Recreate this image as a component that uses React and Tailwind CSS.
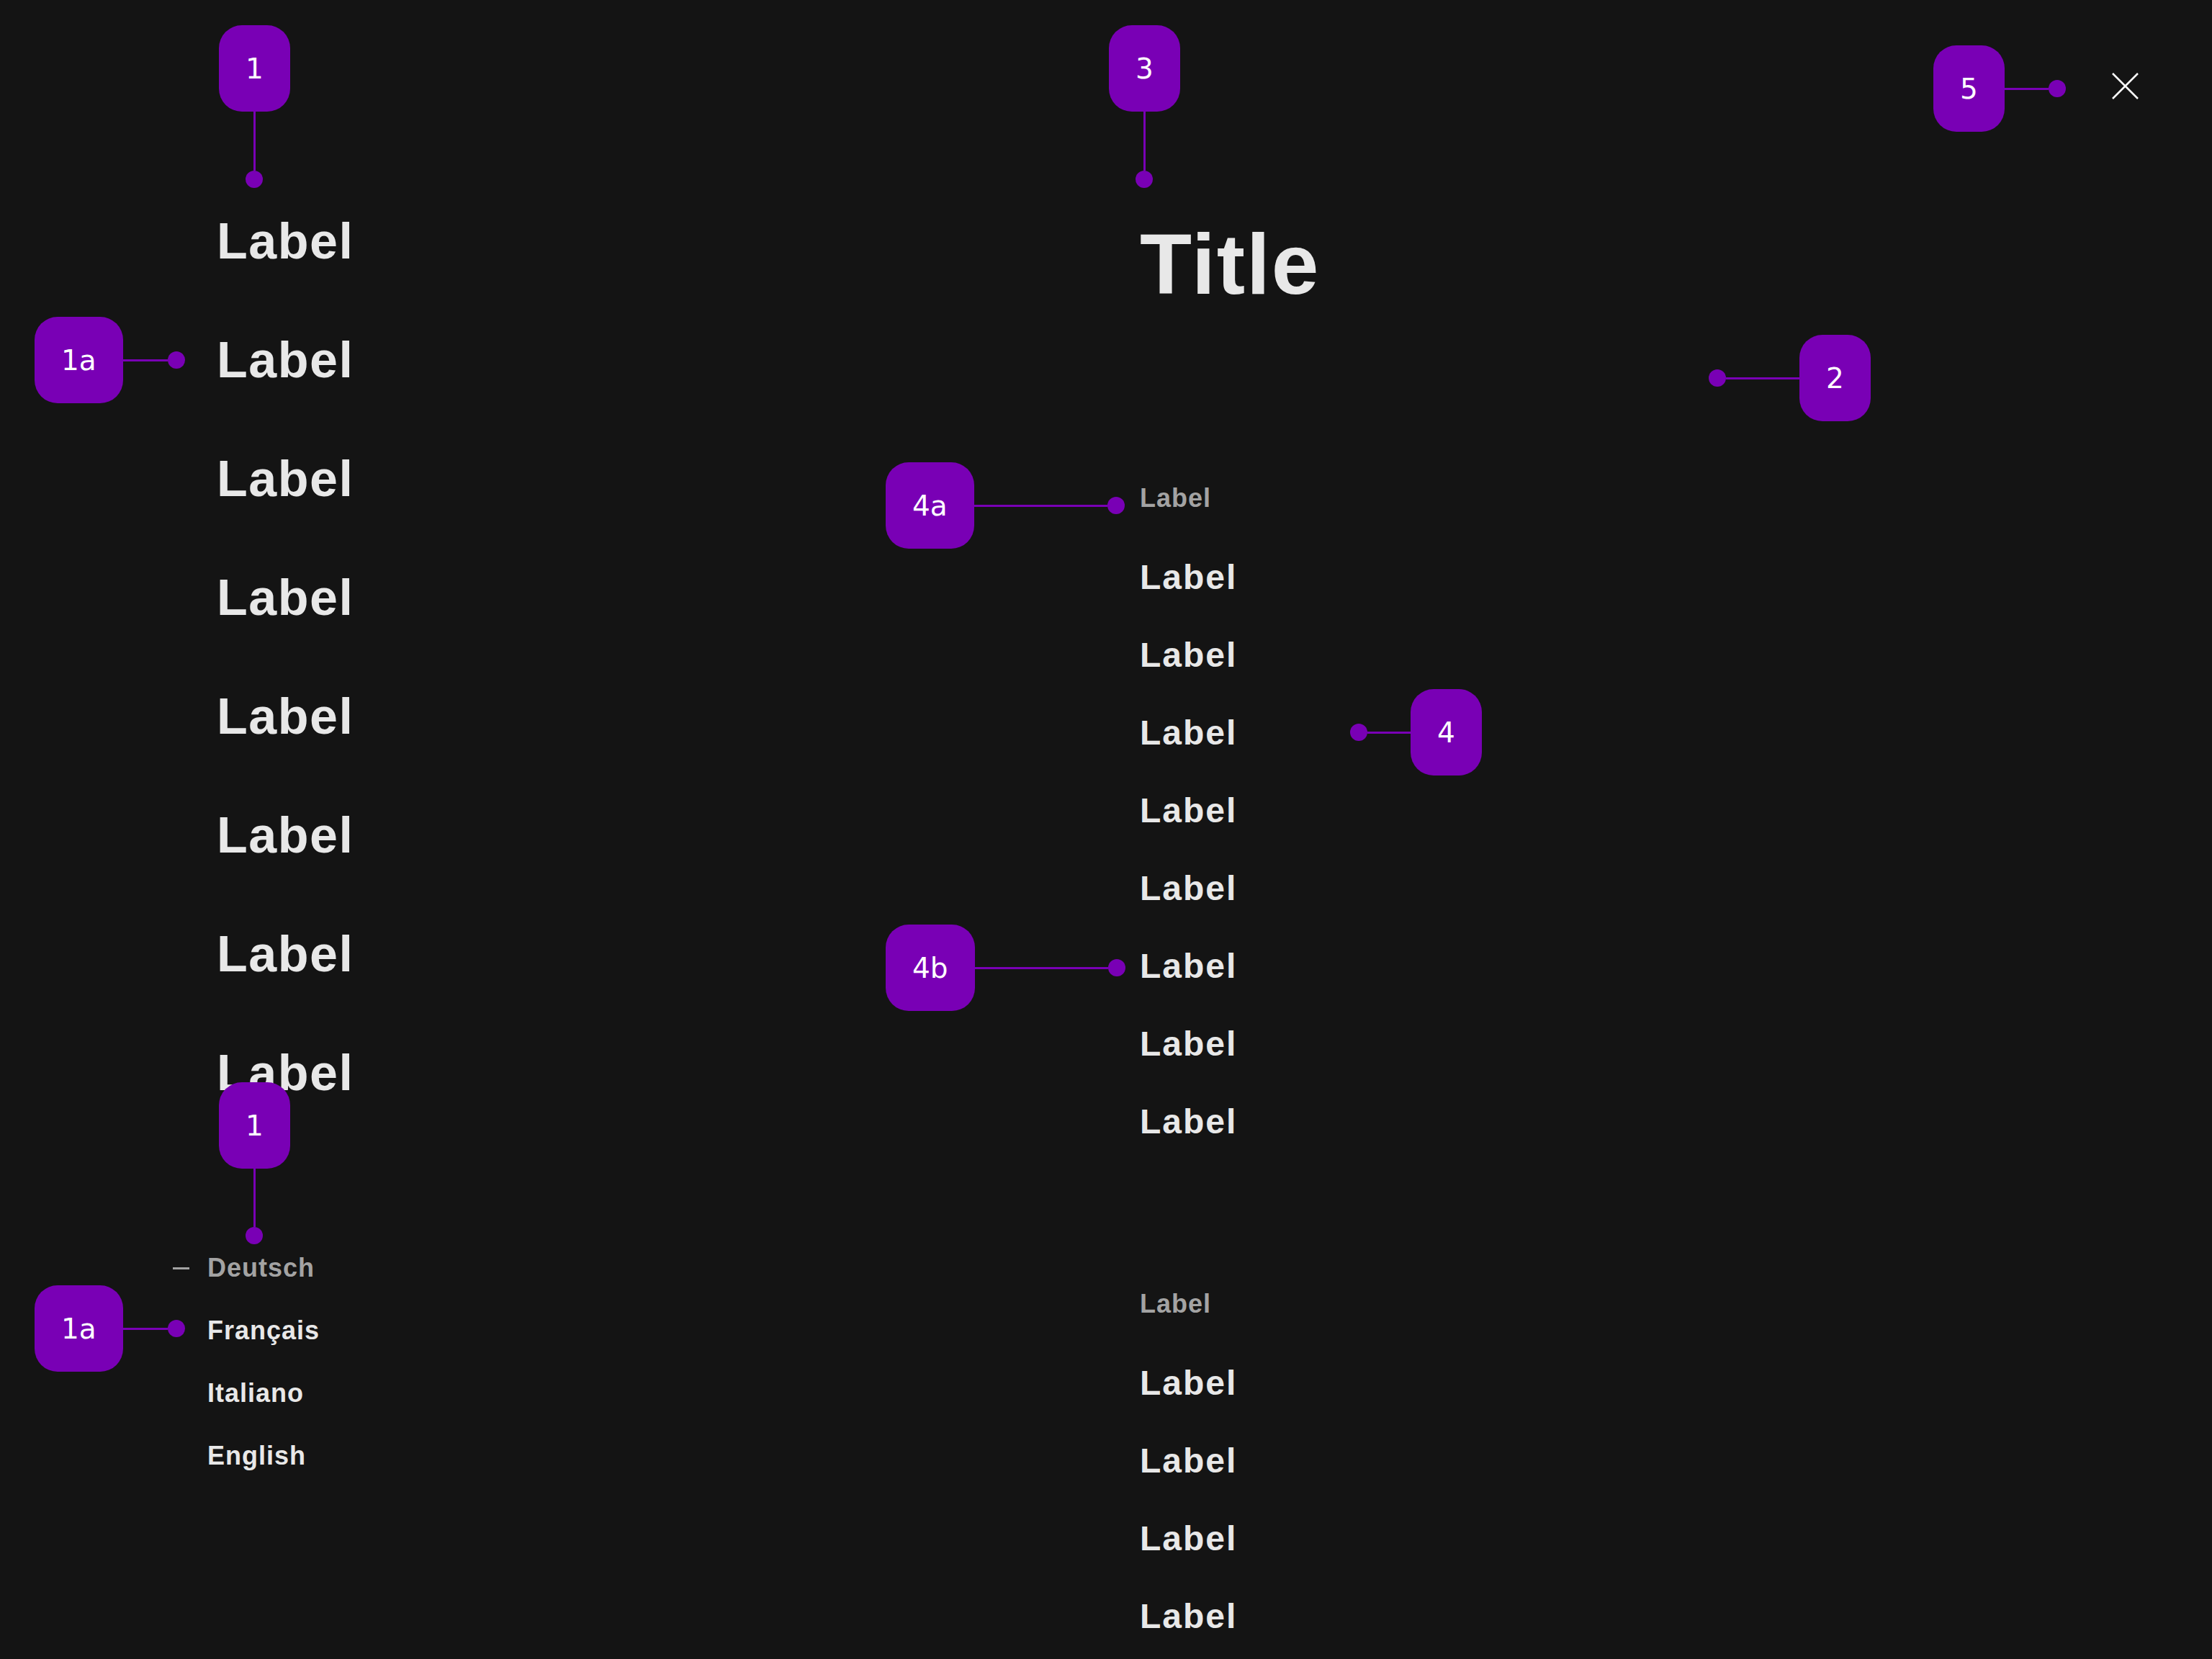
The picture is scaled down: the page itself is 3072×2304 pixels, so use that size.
const labelsLeft = Array.from({ length: 8 }, () => "Label");
const labelsRight = Array.from({ length: 8 }, () => "Label");
const labelsRightSecond = Array.from({ length: 4 }, () => "Label");
const languages = ["Deutsch", "Français", "Italiano", "English"];

// purple annotation marker
function Badge({ children }) {
  return (
    <div className="flex h-[120px] shrink-0 items-center justify-center rounded-[32px] bg-[#7900b5] px-[37px] font-['DejaVu_Sans',sans-serif] text-[39px] font-normal leading-none tracking-normal text-white">
      {children}
    </div>
  );
}

function Dot() {
  return <div className="h-6 w-6 shrink-0 rounded-full bg-[#7900b5]" />;
}

function CloseIcon() {
  return (
    <svg width="37" height="37" viewBox="0 0 37 37" fill="none">
      <path d="M1 1L36 36M36 1L1 36" stroke="#ffffff" strokeWidth="2.5" />
    </svg>
  );
}

export default function App() {
  return (
    <div className="relative flex h-[2304px] w-[3072px] items-start overflow-hidden bg-[#141414] font-['Liberation_Sans',Arial,sans-serif] font-bold text-[#e8e8e8]">
      {/* left column */}
      <div className="w-[1583px] shrink-0 pl-[301px] pt-[253px]">
        <ul>
          {labelsLeft.map((l, i) => (
            <li key={i} className="text-[70px] leading-[165px] tracking-[1.5px]">
              {l}
            </li>
          ))}
        </ul>

        <ul className="mt-[144px] -ml-[13px]">
          {languages.map((lang, i) => (
            <li
              key={lang}
              className={
                i === 0
                  ? "relative text-[36px] leading-[87px] tracking-[1px] text-[#a3a3a3]"
                  : "text-[36px] leading-[87px] tracking-[1px]"
              }
            >
              {i === 0 && (
                <span className="absolute left-[-48px] top-[43px] h-[3px] w-[23px] bg-[#a3a3a3]" />
              )}
              {lang}
            </li>
          ))}
        </ul>
      </div>

      {/* right column */}
      <div className="flex-1 pt-[308px]">
        <h1 className="text-[118px] leading-[118px] tracking-[2px]">Title</h1>

        <p className="mt-[248px] text-[36px] leading-[36px] tracking-[1px] text-[#a3a3a3]">Label</p>
        <ul className="mt-[38px]">
          {labelsRight.map((l, i) => (
            <li key={i} className="text-[48px] leading-[108px] tracking-[2px]">
              {l}
            </li>
          ))}
        </ul>

        <p className="mt-[181px] text-[36px] leading-[36px] tracking-[1px] text-[#a3a3a3]">Label</p>
        <ul className="mt-[38px]">
          {labelsRightSecond.map((l, i) => (
            <li key={i} className="text-[48px] leading-[108px] tracking-[2px]">
              {l}
            </li>
          ))}
        </ul>
      </div>

      <button className="mr-[102px] mt-[101px] h-[37px] w-[37px] shrink-0">
        <CloseIcon />
      </button>

      {/* annotations */}
      <div className="absolute left-[304px] top-[35px] flex flex-col items-center">
        <Badge>1</Badge>
        <div className="h-[82px] w-[3px] bg-[#7900b5]" />
        <Dot />
      </div>
      <div className="absolute left-[48px] top-[440px] flex items-center">
        <Badge>1a</Badge>
        <div className="h-[3px] w-[62px] bg-[#7900b5]" />
        <Dot />
      </div>

      <div className="absolute left-[304px] top-[1503px] flex flex-col items-center">
        <Badge>1</Badge>
        <div className="h-[81px] w-[3px] bg-[#7900b5]" />
        <Dot />
      </div>
      <div className="absolute left-[48px] top-[1785px] flex items-center">
        <Badge>1a</Badge>
        <div className="h-[3px] w-[62px] bg-[#7900b5]" />
        <Dot />
      </div>

      <div className="absolute left-[1540px] top-[35px] flex flex-col items-center">
        <Badge>3</Badge>
        <div className="h-[82px] w-[3px] bg-[#7900b5]" />
        <Dot />
      </div>

      <div className="absolute left-[1230px] top-[642px] flex items-center">
        <Badge>4a</Badge>
        <div className="h-[3px] w-[185px] bg-[#7900b5]" />
        <Dot />
      </div>
      <div className="absolute left-[1230px] top-[1284px] flex items-center">
        <Badge>4b</Badge>
        <div className="h-[3px] w-[185px] bg-[#7900b5]" />
        <Dot />
      </div>

      <div className="absolute left-[1875px] top-[957px] flex items-center">
        <Dot />
        <div className="h-[3px] w-[60px] bg-[#7900b5]" />
        <Badge>4</Badge>
      </div>

      <div className="absolute left-[2373px] top-[465px] flex items-center">
        <Dot />
        <div className="h-[3px] w-[102px] bg-[#7900b5]" />
        <Badge>2</Badge>
      </div>

      <div className="absolute left-[2685px] top-[63px] flex items-center">
        <Badge>5</Badge>
        <div className="h-[3px] w-[61px] bg-[#7900b5]" />
        <Dot />
      </div>
    </div>
  );
}
